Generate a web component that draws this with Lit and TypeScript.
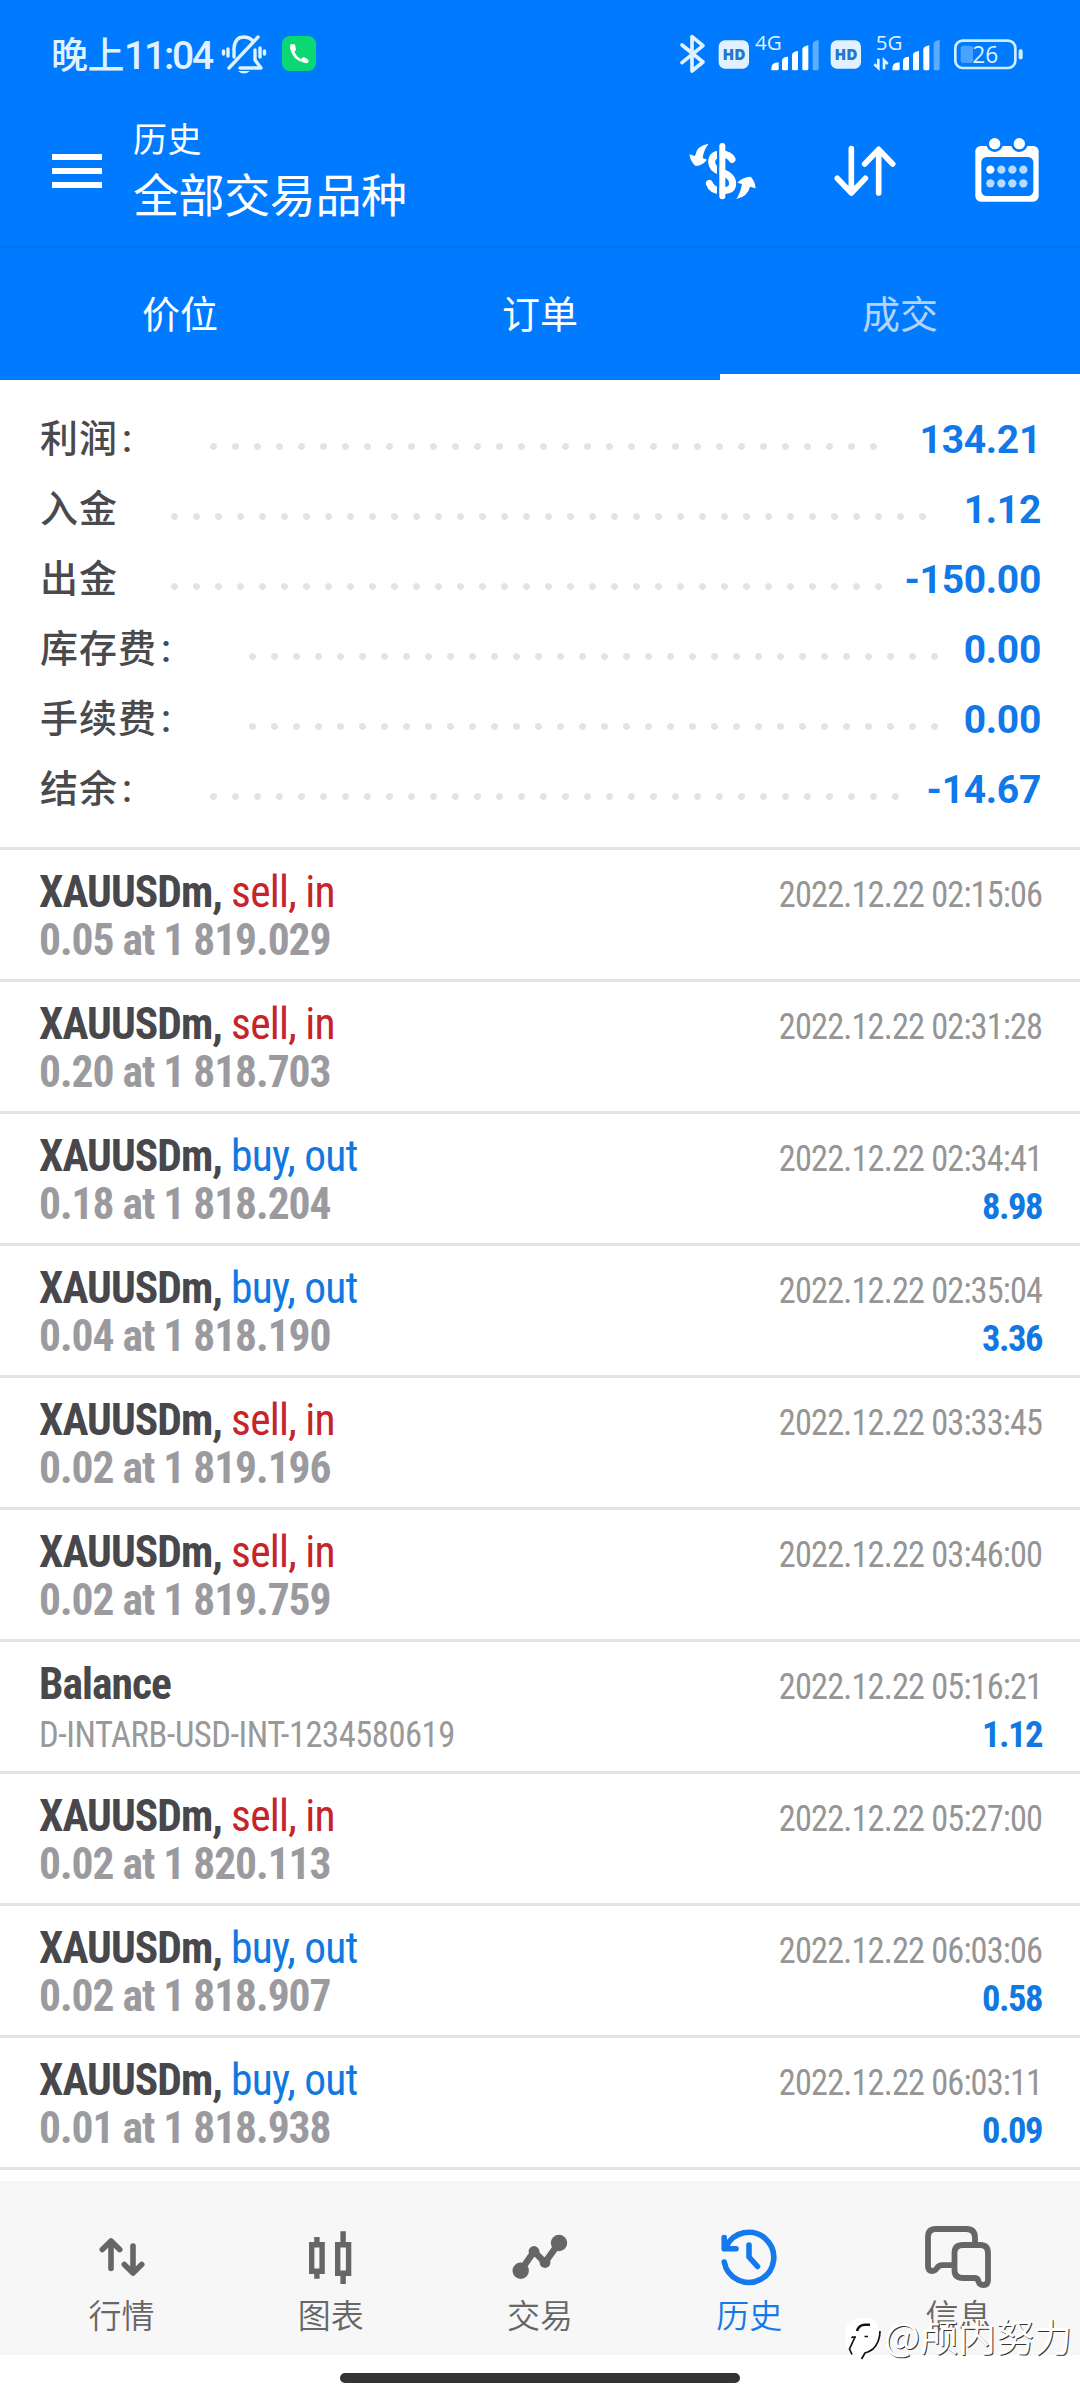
import { LitElement, html, css, svg, nothing } from "lit";
import { customElement } from "lit/decorators.js";

type Deal = { name: string; side?: "sell, in" | "buy, out"; detail: string; time: string; profit?: string };

const SUMMARY: [string, string, number, number][] = [
  ["利润:", "134.21", 210, 877],
  ["入金", "1.12", 171, 927],
  ["出金", "-150.00", 171, 883],
  ["库存费:", "0.00", 249, 939],
  ["手续费:", "0.00", 249, 939],
  ["结余:", "-14.67", 210, 900],
];

const DEALS: Deal[] = [
  { name: "XAUUSDm", side: "sell, in", detail: "0.05 at 1 819.029", time: "2022.12.22 02:15:06" },
  { name: "XAUUSDm", side: "sell, in", detail: "0.20 at 1 818.703", time: "2022.12.22 02:31:28" },
  { name: "XAUUSDm", side: "buy, out", detail: "0.18 at 1 818.204", time: "2022.12.22 02:34:41", profit: "8.98" },
  { name: "XAUUSDm", side: "buy, out", detail: "0.04 at 1 818.190", time: "2022.12.22 02:35:04", profit: "3.36" },
  { name: "XAUUSDm", side: "sell, in", detail: "0.02 at 1 819.196", time: "2022.12.22 03:33:45" },
  { name: "XAUUSDm", side: "sell, in", detail: "0.02 at 1 819.759", time: "2022.12.22 03:46:00" },
  { name: "Balance", detail: "D-INTARB-USD-INT-1234580619", time: "2022.12.22 05:16:21", profit: "1.12" },
  { name: "XAUUSDm", side: "sell, in", detail: "0.02 at 1 820.113", time: "2022.12.22 05:27:00" },
  { name: "XAUUSDm", side: "buy, out", detail: "0.02 at 1 818.907", time: "2022.12.22 06:03:06", profit: "0.58" },
  { name: "XAUUSDm", side: "buy, out", detail: "0.01 at 1 818.938", time: "2022.12.22 06:03:11", profit: "0.09" },
];

const NAV = [
  {
    label: "行情",
    icon: svg`<g fill="none" stroke="currentColor" stroke-width="5.6" stroke-linecap="round" stroke-linejoin="round">
      <path d="M29 47.5V20M20.300 28.5L29 20L37.700 28.5M51 25V51M42.300 43.5L51 52L59.700 43.5"/></g>`,
  },
  {
    label: "图表",
    icon: svg`<g fill="none" stroke="currentColor" stroke-width="5.4">
      <path d="M20.7 23.7H31.1V50.3H20.7ZM25.9 16V21M25.9 53V57.7M46.7 23.7H57.6V52.3H46.7ZM52.1 10.3V21M52.1 55V63"/></g>`,
  },
  {
    label: "交易",
    icon: svg`<path d="M20.7 49.7L34 30.5L45 41.5L59 22" fill="none" stroke="currentColor" stroke-width="6.5"/>
      <g fill="currentColor"><circle cx="20.7" cy="49.7" r="8.2"/><circle cx="34" cy="30.5" r="5.4"/><circle cx="45" cy="41.5" r="5.4"/><circle cx="59" cy="22" r="8.2"/></g>`,
  },
  {
    label: "历史",
    active: true,
    icon: svg`<g fill="none" stroke="currentColor" stroke-width="5.6" stroke-linecap="round" stroke-linejoin="round">
      <path d="M15.2 41A25 25 0 1 0 17 26M15.2 16.5V27.7H27M40 24V36L48.5 45.5"/></g>`,
  },
  {
    label: "信息",
    icon: svg`<g fill="none" stroke="currentColor" stroke-width="5.8" stroke-linejoin="round">
      <path d="M57 25V17Q57 8 48.5 8H18Q10 8 10 16V45Q10 50 14.5 50Q17 50 19 47Q21 44.2 24 44.2H36"/>
      <path d="M45 24H62Q70 24 70 32V59Q70 64 65.5 64Q61.5 64 60.5 60.5Q60 57 56 57H45Q36.5 57 36.5 49V32Q36.5 24 45 24Z"/></g>`,
  },
];

const signal = (x: number) => svg`
  <path d="M${x} 210V205Q${x} 186 ${x + 22} 186V205Q${x + 22} 210 ${x + 17} 210Z" fill="#fff"/>
  <path d="M${x + 32} 205V180Q${x + 33} 170 ${x + 50} 169V205Q${x + 50} 210 ${x + 45} 210H${x + 37}Q${x + 32} 210 ${x + 32} 205Z" fill="#fff"/>
  <path d="M${x + 62} 205V164Q${x + 63} 154 ${x + 80} 152V205Q${x + 80} 210 ${x + 75} 210H${x + 67}Q${x + 62} 210 ${x + 62} 205Z" fill="#fff"/>
  <path d="M${x + 93} 205V147Q${x + 94} 138 ${x + 111} 135V205Q${x + 111} 210 ${x + 106} 210H${x + 98}Q${x + 93} 210 ${x + 93} 205Z" fill="#fff"/>
  <path d="M${x + 124} 205V131Q${x + 125} 121 ${x + 142} 119V205Q${x + 142} 210 ${x + 137} 210H${x + 129}Q${x + 124} 210 ${x + 124} 205Z" fill="#5cacff"/>`;

const hd = (x: number) => svg`
  <rect x=${x} y="120" width="91" height="85" rx="19" fill="#e2f1ff"/>
  <text x=${x + 46} y="179" text-anchor="middle" font-size="47" font-weight="800" textLength="69" lengthAdjust="spacingAndGlyphs" fill="#2377cf">HD</text>`;

@customElement("app-root")
export class AppRoot extends LitElement {
  static styles = css`
    :host {
      display: block;
      font-family: Roboto, "Noto Sans CJK SC", sans-serif;
    }
    svg { display: block; flex: none; overflow: visible; }
    .screen {
      position: relative;
      display: flex;
      flex-direction: column;
      width: 1080px;
      height: 2400px;
      overflow: hidden;
      background: #fff;
    }
    .top { background: #007aff; color: #fff; }
    .status {
      display: flex;
      align-items: center;
      height: 108px;
      padding-left: 51px;
    }
    .clock { display: flex; align-items: baseline; width: 168px; padding-bottom: 2px; font-weight: 500; color: #dff3ff; white-space: nowrap; }
    .clock-cjk { font-size: 37px; letter-spacing: -0.5px; }
    .clock-num { font-size: 39px; letter-spacing: -2.2px; }
    .status-left { margin-left: 2px; }
    .status-right { margin-left: auto; margin-right: 57px; font-family: "Open Sans", sans-serif; }
    .bar {
      display: flex;
      align-items: flex-start;
      height: 140px;
      padding: 0 38px 0 52px;
      box-sizing: border-box;
      border-bottom: 3px solid #0075f0;
    }
    .menu { margin-top: 46px; }
    .titles { flex: 1; margin: 5px 0 0 31px; white-space: nowrap; font-family: "Noto Sans CJK SC", sans-serif; }
    .title { font-size: 34px; line-height: 49px; letter-spacing: 0.5px; }
    .subtitle { font-size: 46px; line-height: 60px; letter-spacing: -0.4px; }
    .actions { display: flex; gap: 72.5px; padding-top: 27px; }
    .tabs { display: grid; grid-template-columns: repeat(3, 1fr); height: 132px; }
    .tab {
      display: flex;
      align-items: center;
      justify-content: center;
      box-sizing: border-box;
      border-bottom: 6px solid transparent;
      font: 38px "Noto Sans CJK SC", sans-serif;
    }
    .tab.on { border-color: #fff; color: #b3d4f8; }
    .summary { display: grid; grid-auto-rows: 70px; padding: 24px 39px 23px 40px; }
    .sum { display: flex; align-items: center; justify-content: space-between; }
    .sum-label { font-size: 38px; line-height: 44px; font-weight: 500; letter-spacing: 1px; color: #4a4a4c; white-space: nowrap; }
    .colon { margin-left: 4px; }
    .sum-value { padding-top: 2px; font-size: 39px; font-weight: 700; letter-spacing: -0.3px; color: #1078e8; }
    .dots {
      height: 7px;
      margin-top: 14px;
      background: radial-gradient(circle at 3.5px 3.5px, #e3e3e3 3px, transparent 3.8px) 0 0 / 22px 7px repeat-x;
    }
    .sum-gap { flex: 1; }
    .deal {
      display: grid;
      grid-template-columns: 1fr auto;
      grid-template-rows: 48px 48px;
      box-sizing: border-box;
      height: 132px;
      padding: 19px 38px 0 39px;
      border-top: 3px solid #e3e3e3;
      line-height: 48px;
      white-space: nowrap;
      font-family: "Roboto Condensed", Roboto, sans-serif;
      font-stretch: 75%;
    }
    .name { font-size: 43.5px; font-weight: 700; letter-spacing: -0.95px; color: #48484c; }
    .side { font-weight: 400; letter-spacing: -0.75px; }
    .sell { color: #c6242a; }
    .buy { color: #1078e0; }
    .detail { font-size: 43.5px; font-weight: 700; letter-spacing: -1.03px; color: #9b9b9f; }
    .comment { padding-top: 2px; font-size: 36px; font-weight: 400; letter-spacing: -0.5px; color: #999; transform: scaleX(0.96); transform-origin: left; }
    .time { padding-top: 2px; font-size: 36.5px; letter-spacing: -0.88px; color: #959595; text-align: right; transform: scaleX(0.94); transform-origin: right; }
    .profit { padding-top: 2px; font-size: 36.5px; font-weight: 700; letter-spacing: -1.5px; color: #1078e0; text-align: right; }
    .end { height: 11px; border-top: 3px solid #e3e3e3; }
    .nav {
      display: grid;
      grid-template-columns: repeat(5, 1fr);
      height: 174px;
      padding: 0 17px;
      background: #f7f7f7;
      color: #666;
    }
    .nav-item { display: flex; flex-direction: column; align-items: center; padding-top: 40px; }
    .nav-item.active { color: #1479ec; }
    .nav-label { font: 350 33px/46px "Noto Sans CJK SC", sans-serif; }
    .gesture { display: flex; justify-content: center; padding-top: 18px; }
    .pill { width: 400px; height: 10px; border-radius: 5px; background: #333; }
    .mark {
      position: absolute;
      left: 839px;
      top: 2310px;
      display: flex;
      align-items: center;
      gap: 3px;
      color: #fff;
      font: 38px/50px "Noto Sans CJK SC", sans-serif;
      text-shadow: 1px 1px 0 #333;
      white-space: nowrap;
    }
  `;

  private renderStatus() {
    return html`<div class="status">
      <div class="clock"><span class="clock-cjk">晚上</span><span class="clock-num">11:04</span></div>
      <svg class="status-left" width="98" height="40" viewBox="0 0 98 40">
        <g fill="none" stroke="#dff3ff" stroke-width="3.4" stroke-linecap="round" stroke-linejoin="round">
          <path d="M13 23V14Q14 3 23 3Q28 3 31 6M8 34L37 3M19 34H40L34 26V16M7 15V22M2.500 17V20M39 14V23M43.500 17V20"/>
        </g>
        <path d="M17 37H29Q23 42 17 37Z" fill="#dff3ff"/>
        <rect x="61" y="2" width="34" height="35" rx="8" fill="#0bd873"/>
        <path d="M70 10Q68.500 11 69 14Q71 26 84 29Q87 29.500 87.500 28V26L83 23L79.500 25Q75 22 73.500 18L75 15.500L74 10.500Z" fill="#fff"/>
      </svg>
      <svg class="status-right" width="345" height="40" viewBox="115 101 1035 120">
        <path d="M127 134L190 185L157 212V109L190 136L127 187" fill="none" stroke="#dff3ff" stroke-width="11" stroke-linejoin="round" stroke-linecap="round"/>
        ${hd(237)}
        <text x="346" y="150" font-size="60" font-weight="500" textLength="80" lengthAdjust="spacingAndGlyphs" fill="#dff3ff">4G</text>
        ${signal(395)}
        ${hd(573)}
        <text x="708" y="150" font-size="60" font-weight="500" textLength="80" lengthAdjust="spacingAndGlyphs" fill="#dff3ff">5G</text>
        <path d="M716 175V203L704 192M733 207V180L744 191" fill="none" stroke="#dff3ff" stroke-width="8"/>
        ${signal(758)}
        <rect x="947" y="121" width="180" height="82" rx="22" fill="none" stroke="#cfeeff" stroke-width="8"/>
        <rect x="963" y="136" width="37" height="52" rx="8" fill="#4aa3ff"/>
        <text x="998" y="189" font-size="70" font-weight="500" textLength="78" lengthAdjust="spacingAndGlyphs" fill="#dff3ff">26</text>
        <rect x="1137" y="147" width="12" height="30" rx="5" fill="#cfeeff"/>
      </svg>
    </div>`;
  }

  private renderActions() {
    return html`<div class="actions">
      <svg width="70" height="70" viewBox="140 405 210 210">
        <g fill="none" stroke="#fff" stroke-width="21" stroke-linecap="round">
          <path d="M275 478Q266 462 244 462Q214 462 214 486Q214 507 243 516Q277 527 277 551Q277 572 245 572Q214 572 207 550"/>
        </g>
        <path d="M234 425V600" stroke="#007aff" stroke-width="8"/>
        <path d="M246 438V589" stroke="#fff" stroke-width="18" stroke-linecap="round"/>
        <path d="M205 431Q169 436 164 468L147 463Q151 487 166 498Q187 497 200 479L187 474Q190 449 205 431Z" fill="#fff"/>
        <path d="M288 597Q300 580 305 552L291 548Q306 531 331 530Q344 543 346 565L329 560Q322 590 288 597Z" fill="#fff"/>
      </svg>
      <svg width="70" height="70" viewBox="570 405 210 210">
        <path d="M634 446V578M592 535L634 579L676 535M716 579V449M674 492L716 448L758 492" fill="none" stroke="#fff" stroke-width="17" stroke-linecap="round" stroke-linejoin="round"/>
      </svg>
      <svg width="70" height="70" viewBox="995 405 210 210">
        <rect x="1005" y="438" width="190" height="167" rx="16" fill="#fff"/>
        <rect x="1023" y="471" width="156" height="117" rx="16" fill="#007aff"/>
        <g fill="#fff" stroke="#007aff" stroke-width="8"><circle cx="1063" cy="431" r="21"/><circle cx="1137" cy="431" r="21"/></g>
        ${[509, 550].map((y) => [1050, 1083, 1116, 1149].map((x) => svg`<circle cx=${x} cy=${y} r="12.5" fill=${x + y === 1559 ? "#fff" : "#b5dbff"}/>`))}
      </svg>
    </div>`;
  }

  private renderDeal(d: Deal) {
    return html`<div class="deal">
      <div class="name">${d.name}${d.side
        ? html`, <span class="side ${d.side.startsWith("sell") ? "sell" : "buy"}">${d.side}</span>`
        : nothing}</div>
      <div class="time">${d.time}</div>
      <div class=${d.side ? "detail" : "comment"}>${d.detail}</div>
      <div class="profit">${d.profit ?? nothing}</div>
    </div>`;
  }

  render() {
    return html`<div class="screen">
      <div class="top">
        ${this.renderStatus()}
        <div class="bar">
          <svg class="menu" width="50" height="34" viewBox="0 0 50 34"><path d="M0 3H50M0 17H50M0 31H50" stroke="#fff" stroke-width="5.800"/></svg>
          <div class="titles"><div class="title">历史</div><div class="subtitle">全部交易品种</div></div>
          ${this.renderActions()}
        </div>
        <div class="tabs">
          <div class="tab">价位</div><div class="tab">订单</div><div class="tab on">成交</div>
        </div>
      </div>
      <div class="summary">
        ${SUMMARY.map(([label, value, from, to]) => html`<div class="sum">
          <span class="sum-label" style="width:${from - 40}px">${label.replace(":", "")}${label.endsWith(":")
            ? html`<span class="colon">:</span>`
            : nothing}</span>
          <span class="dots" style="width:${to - from}px"></span>
          <span class="sum-gap"></span>
          <span class="sum-value">${value}</span>
        </div>`)}
      </div>
      ${DEALS.map((d) => this.renderDeal(d))}
      <div class="end"></div>
      <div class="nav">
        ${NAV.map((n) => html`<div class="nav-item ${n.active ? "active" : ""}">
          <svg width="80" height="70" viewBox="0 0 80 70">${n.icon}</svg>
          <span class="nav-label">${n.label}</span>
        </div>`)}
      </div>
      <div class="gesture"><div class="pill"></div></div>
      <div class="mark">
        <svg width="42" height="48" viewBox="0 0 42 48">
          <path d="M22 7H27Q40 8 40 22Q40 36 30 41L22 47Q22 43 14 43Q6 38 6 25Q6 8 22 7Z" fill="#fff"/>
          <g fill="none" stroke="#111" stroke-width="1.7">
            <path d="M12.500 27L13.500 26H17M16 26L10.500 38L13 43.500M25.500 25.500H29M41 20Q41 31 34 38Q30 41 26 42L22.500 48"/>
            <path d="M18 20Q20 13.700 26 13.700H31" stroke-width="2.400"/>
          </g>
        </svg>
        <span>@颅内努力</span>
      </div>
    </div>`;
  }
}
